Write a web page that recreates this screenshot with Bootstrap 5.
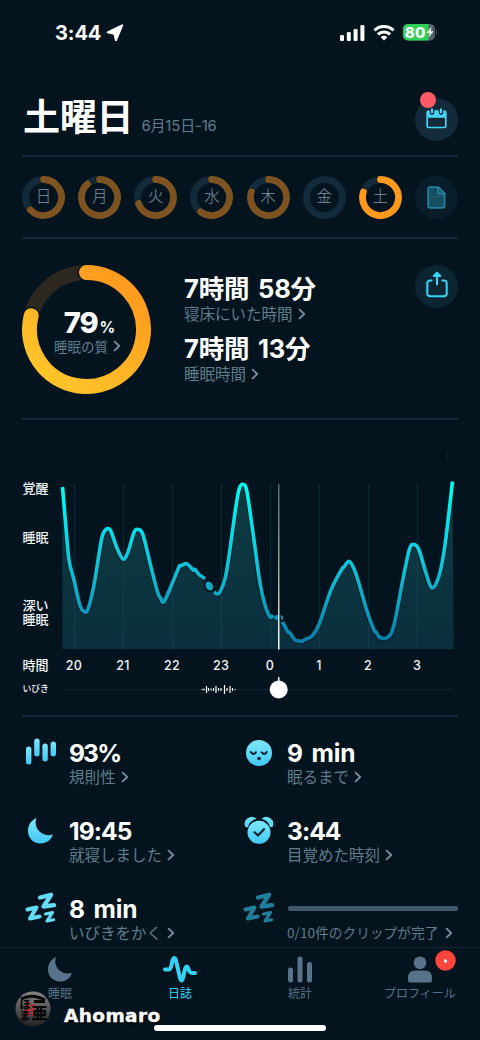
<!DOCTYPE html>
<html lang="ja" data-bs-theme="dark">
<head>
<meta charset="utf-8">
<meta name="viewport" content="width=device-width, initial-scale=1">
<title>睡眠日誌</title>
<link href="https://cdn.jsdelivr.net/npm/bootstrap@5.3.0/dist/css/bootstrap.min.css" rel="stylesheet">
<style>
:root{--night:#04141e;--rule:#13293a;--dim:#5f7d8b;--jp:"Noto Sans CJK JP",sans-serif;--num:Inter,"Noto Sans CJK JP",sans-serif}
body{background:var(--night);color:#fff;font-family:var(--jp);width:480px;height:1040px;overflow:hidden;line-height:1}
svg{display:block;flex:none}
.phone{width:480px;height:1040px}
.statusbar{height:64px;padding:1px 42px 0 55px}
.clock{font:700 20px/24px Inter,sans-serif;letter-spacing:-.1px}
.ruled{margin:0 22px;border-bottom:2px solid var(--rule)}
.head{height:93px}
.day-title{font-size:37px;font-weight:700;line-height:40px;letter-spacing:-.2px}
.date-sub{font:400 15px/20px var(--num);color:var(--dim);letter-spacing:-.2px}
.orb{width:43px;height:43px;border-radius:50%;background:#122a3a}
.alert-dot{position:absolute;left:5px;top:-6px;width:16px;height:16px;border-radius:50%;background:#ff5a68}
.week{height:82px}
.ring{width:43px;height:43px}
.ring span{position:absolute;inset:0;font-size:15.5px;line-height:39px;text-align:center;color:#8095a3;font-weight:300}
.quality{height:181px}
.dial{width:129px;height:129px}
.dial-text{position:absolute;inset:0;padding-top:43px}
.pct{font:800 29px/30px Inter,sans-serif;letter-spacing:-1px}
.pct small{font-size:15.5px;font-weight:700;margin-left:2px}
.caption{height:18px;font-size:15.5px;line-height:20px;color:var(--dim);white-space:nowrap}
.caption>span{margin-top:-2px}
.caption svg{margin-left:5px;margin-top:-1px}
.big{font:700 25.5px/30px Inter,"Noto Sans CJK JP",sans-serif;letter-spacing:-.2px;word-spacing:3px;white-space:nowrap}
.chart{height:296px}
.chart text{fill:#f2f5f6}
.stats{height:230px;overflow:hidden}
.stat{height:78px;width:218px}
.ico{width:47px;padding-left:4px}
.val{font:700 24.5px/30px Inter,sans-serif;letter-spacing:-.9px}
.val.words{letter-spacing:-.1px;word-spacing:3px}
.clipbar{height:5px;width:170px;border-radius:2px;background:#40596a;margin:-2px 0 0 1px}
.tabs{height:93px;border-top:1px solid #112430}
.tab{width:120px;padding-top:8px;color:#58738a;font-size:12px;line-height:14px}
.tab.on{color:#34d3f5}
.tab svg{margin-bottom:3px}
.pin{position:absolute;left:75px;top:2px;margin-left:0}
.home{position:absolute;left:154px;top:1025px;width:172px;height:6px;border-radius:3px;background:#fff}
.wm{position:absolute;left:14px;top:990px}
.wm b{font:700 18.5px/24px "DejaVu Sans",sans-serif;letter-spacing:.4px;-webkit-text-stroke:.4px #fff;text-shadow:1px 2px 2px #000}
</style>
</head>
<body>
<svg width="0" height="0" class="position-absolute">
  <defs>
    <linearGradient id="ice" x1="0" y1="0" x2="0" y2="1"><stop offset="0" stop-color="#7de8fb"/><stop offset="1" stop-color="#42c8f5"/></linearGradient>
    <symbol id="chev" viewBox="0 0 8 12"><path d="M1.6 1.6 6.2 6 1.6 10.4" fill="none" stroke="#7591a0" stroke-width="1.8" stroke-linecap="round" stroke-linejoin="round"/></symbol>
    <symbol id="zzz" viewBox="0 0 32 32"><g fill="none" stroke-linecap="round" stroke-linejoin="round"><path d="M15 5.500 26 2.800 18.500 14.500 29 13.200" stroke-width="4.300"/><path d="M2.500 17.500 11.500 15.500 5 26.500 14.500 24.500" stroke-width="4"/><path d="M20.500 22 27.500 20.500 22 29 28.500 27.800" stroke-width="3.200"/></g></symbol>
  </defs>
</svg>
<div class="phone position-relative d-flex flex-column">
  <header class="statusbar d-flex align-items-center">
    <span class="clock">3:44</span>
    <svg style="margin-left:5px" width="18" height="18" viewBox="0 0 18 18"><path d="M16.2 1.3 10 16.2 8.3 9.7 1.7 8.3Z" fill="#fff" stroke="#fff" stroke-width="2" stroke-linejoin="round"/></svg>
    <svg class="ms-auto" width="26" height="18" viewBox="0 0 26 18" fill="#fff"><rect x="0" y="11" width="4" height="6" rx="1.2"/><rect x="6.800" y="8" width="4" height="9" rx="1.2"/><rect x="13.600" y="5" width="4" height="12" rx="1.2"/><rect x="20.4" y="1" width="4" height="16" rx="1.2"/></svg>
    <svg style="margin-left:7px" width="22" height="17" viewBox="0 0 22 17"><g fill="none" stroke="#fff" stroke-width="3"><path d="M1.4 6.4a13.8 13.8 0 0 1 19.2 0"/><path d="M4.9 10.4a8.7 8.7 0 0 1 12.2 0"/></g><path d="M11 16.5 7.7 13.2a4.7 4.7 0 0 1 6.6 0Z" fill="#fff"/></svg>
    <svg style="margin-left:8px;margin-top:-2px" width="35" height="18" viewBox="0 0 35 18"><rect x="0" y="1" width="32" height="16.4" rx="5" fill="#53606a"/><path d="M5 1H25.5V17.4H5A5 5 0 0 1 0 12.4V6A5 5 0 0 1 5 1Z" fill="#30cf58"/><path d="M33 6.5q2 2.5 0 5.5Z" fill="#53606a"/><text x="1.8" y="14.5" font-family="Inter,sans-serif" font-weight="800" font-size="15" fill="#fff" textLength="20.5">80</text><path d="M28.5 3.6 23.7 10h3l-1.2 4.6L30.6 8.200h-3Z" fill="#fff"/></svg>
  </header>

  <section class="head ruled d-flex">
    <h1 class="day-title mb-0" style="padding:31px 0 0 1px">土曜日</h1>
    <span class="date-sub ms-2" style="padding-top:52px">6月15日-16</span>
    <div class="orb ms-auto position-relative d-flex justify-content-center" style="margin-top:34px;padding-top:10px">
      <svg width="21" height="21" viewBox="0 0 21 21"><rect x="1.200" y="3" width="18.600" height="16.500" rx="1.6" fill="none" stroke="#45d5f6" stroke-width="1.7"/><path d="M1 3H20V9.800H1Z" fill="#45d5f6"/><path d="M6 1V4.600M15 1V4.600" stroke="#122a3a" stroke-width="4.600" stroke-linecap="round"/><path d="M6 1.300V4.600M15 1.300V4.600" stroke="#45d5f6" stroke-width="2" stroke-linecap="round"/></svg>
      <span class="alert-dot"></span>
    </div>
  </section>

  <section class="week ruled d-flex justify-content-between align-items-center" id="week">
    <div class="orb order-last d-flex align-items-center justify-content-center" style="background:#071e2a">
      <svg width="19" height="23" viewBox="0 0 19 23"><path d="M3 1.200H11.500L17.500 7.300V20A1.800 1.800 0 0 1 15.700 21.800H3A1.800 1.800 0 0 1 1.200 20V3A1.800 1.800 0 0 1 3 1.200Z" fill="#164e62" stroke="#2382a0" stroke-width="1.800"/><path d="M11.200 1.500V6A1.700 1.700 0 0 0 12.900 7.700H17.300" fill="none" stroke="#2382a0" stroke-width="1.800"/><path d="M3.500 10.500H13" stroke="#2b7188" stroke-dasharray="2 1"/></svg>
    </div>
  </section>

  <section class="quality ruled d-flex">
    <div class="dial position-relative" style="margin-top:25.500px">
      <svg width="129" height="129" viewBox="0 0 129 129">
        <defs><linearGradient id="sun" gradientUnits="userSpaceOnUse" x1="100" y1="10" x2="25" y2="110"><stop offset="0" stop-color="#ff991d"/><stop offset="1" stop-color="#ffc42a"/></linearGradient></defs>
        <circle cx="64.500" cy="64.500" r="57" fill="none" stroke="#2d2721" stroke-width="15"/>
        <g fill="none" stroke-linecap="round"><path d="M64.500 7.500A57 57 0 1 1 9.200 50.700" stroke="#04141e" stroke-width="18"/><path d="M64.500 7.500A57 57 0 1 1 9.200 50.700" stroke="url(#sun)" stroke-width="15"/></g>
      </svg>
      <div class="dial-text text-center">
        <div class="pct" style="padding-left:5px">79<small>%</small></div>
        <div class="caption d-flex align-items-center justify-content-center" style="font-size:13.500px;line-height:16px;margin-top:-5px;padding-left:2px"><span>睡眠の質</span><svg width="8" height="12"><use href="#chev"/></svg></div>
      </div>
    </div>
    <div style="margin-left:33px;padding-top:35px">
      <div class="big">7時間 58分</div>
      <div class="caption d-flex align-items-center" style="margin-top:1px"><span>寝床にいた時間</span><svg width="8" height="12"><use href="#chev"/></svg></div>
      <div class="big" style="margin-top:11px">7時間 13分</div>
      <div class="caption d-flex align-items-center" style="margin-top:1px"><span>睡眠時間</span><svg width="8" height="12"><use href="#chev"/></svg></div>
    </div>
    <div class="orb ms-auto d-flex justify-content-center" style="margin-top:26px;padding-top:6px;background:#0b2532">
      <svg width="22" height="27" viewBox="0 0 22 27" fill="none" stroke="#35d9f8" stroke-width="2" stroke-linecap="round" stroke-linejoin="round"><path d="M5.600 9.500H4A2.600 2.600 0 0 0 1.300 12.100V22.500A2.600 2.600 0 0 0 4 25.200H18A2.600 2.600 0 0 0 20.700 22.500V12.100A2.600 2.600 0 0 0 18 9.500H16.400M11 13.500V4"/><path d="M11 1.800 7.800 5H14.200Z" fill="#35d9f8"/></svg>
    </div>
  </section>

  <section class="chart position-relative">
    <svg width="480" height="296" viewBox="0 420 480 296">
      <defs>
        <linearGradient id="line" gradientUnits="userSpaceOnUse" x1="0" y1="484" x2="0" y2="642"><stop offset="0" stop-color="#00fff0"/><stop offset=".25" stop-color="#05e3ef"/><stop offset=".55" stop-color="#10bfd6"/><stop offset="1" stop-color="#087fa8"/></linearGradient>
        <linearGradient id="area" gradientUnits="userSpaceOnUse" x1="0" y1="484" x2="0" y2="649"><stop offset="0" stop-color="#0d3b41"/><stop offset="1" stop-color="#0a2f3e"/></linearGradient>
        <linearGradient id="cursor" x1="0" y1="0" x2="0" y2="1"><stop offset="0" stop-color="#58646b"/><stop offset=".6" stop-color="#a8afb3"/><stop offset="1" stop-color="#fff"/></linearGradient>
      </defs>
      <path id="fillArea" fill="url(#area)"/>
      <path d="M74.500 484V649M123.500 484V649M172.500 484V649M221.500 484V649M270.500 484V649M319.500 484V649M368.500 484V649M417.500 484V649" stroke="#1a5267" stroke-opacity=".36"/>
      <g id="curve" fill="none" stroke-linejoin="round"></g>
      <ellipse cx="209.300" cy="586" rx="5.300" ry="6.500" transform="rotate(-25 209.300 586)" fill="#04141e"/>
      <ellipse cx="209.300" cy="586" rx="3.500" ry="4.800" transform="rotate(-25 209.300 586)" fill="#12a9c4"/>
      <circle cx="276.800" cy="617.400" r="2.500" fill="#0c93b4"/><path d="M281 615.500q1.500 1.500 1 4" stroke="#0c93b4" stroke-width="2" fill="none"/>
      <rect x="278" y="484" width="1.500" height="165.500" fill="url(#cursor)"/>
      <path d="M447.500 452v9" stroke="#0d2230"/>
      <g font-family="Noto Sans CJK JP,sans-serif" font-size="13" font-weight="500">
        <text x="22.500" y="493">覚醒</text><text x="22.500" y="542">睡眠</text><text x="22.500" y="610">深い</text><text x="22.500" y="624">睡眠</text><text x="22.500" y="669.500">時間</text><text x="22.500" y="692" font-size="8.800">いびき</text>
      </g>
      <g font-family="Inter,sans-serif" font-size="12.500" font-weight="500" letter-spacing=".3" text-anchor="middle">
        <text x="74" y="669.500">20</text><text x="123" y="669.500">21</text><text x="172" y="669.500">22</text><text x="221" y="669.500">23</text><text x="270" y="669.500">0</text><text x="319" y="669.500">1</text><text x="368" y="669.500">2</text><text x="417" y="669.500">3</text>
      </g>
      <path d="M63 689.500H453" stroke="#0b2230"/>
      <path d="M202 689v1M204 688.500v2M206.500 686v7M208.500 688v3M211 688.500v2M213.500 688v3M216 686v7M218.500 688v3M221 688v3M224.500 685v9M227 688v3M230 686v7M232.500 688v3M235 689v1" stroke="#fff" stroke-width="1.200"/>
      <path d="M278.700 677v6" stroke="#fff" stroke-width="1.500"/><circle cx="278.700" cy="689.500" r="9" fill="#fff"/>
    </svg>
  </section>
  <div class="ruled" style="margin-top:-1px"></div>

  <section class="stats px-4" style="padding-top:21px">
    <div class="row g-0" style="margin-left:-2px;margin-right:-4px">
      <div class="stat d-flex"><div class="ico"><svg width="31" height="27" viewBox="0 0 31 27" fill="url(#ice)"><rect x="0" y="8.500" width="5.400" height="18" rx="2.700"/><rect x="8.200" y="0.500" width="5.400" height="18" rx="2.700"/><rect x="16.400" y="5.500" width="5.400" height="18" rx="2.700"/><rect x="24.600" y="3.500" width="5.400" height="15" rx="2.700"/></svg></div>
        <div><div class="val" style="letter-spacing:-1.800px">93%</div><div class="caption d-flex align-items-center"><span>規則性</span><svg width="8" height="12"><use href="#chev"/></svg></div></div></div>
      <div class="stat d-flex"><div class="ico"><svg width="30" height="30" viewBox="0 0 30 30"><circle cx="15" cy="15" r="13" fill="url(#ice)"/><g fill="none" stroke="#05202c" stroke-width="2" stroke-linecap="round"><path d="M6.800 14q2.500 3.600 5 .4M17.700 14.400q2.700 3.200 5-.4"/></g><circle cx="15" cy="20.500" r="1.800" fill="#05202c"/></svg></div>
        <div><div class="val words">9 min</div><div class="caption d-flex align-items-center"><span>眠るまで</span><svg width="8" height="12"><use href="#chev"/></svg></div></div></div>
      <div class="stat d-flex"><div class="ico"><svg width="28" height="30" viewBox="0 0 28 30"><path d="M10.500 2C8.500 7 10 12.500 14 16c3.700 3.100 8.500 4 12.800 2.300C25.500 24 20.500 27.500 14.500 27.500 7.500 27.500 2 22 2 15 2 9 5.500 4 10.500 2Z" fill="url(#ice)"/></svg></div>
        <div><div class="val">19:45</div><div class="caption d-flex align-items-center"><span>就寝しました</span><svg width="8" height="12"><use href="#chev"/></svg></div></div></div>
      <div class="stat d-flex"><div class="ico"><svg width="30" height="30" viewBox="0 0 30 30"><g fill="url(#ice)"><path d="M1.600 9.500A6.300 6.300 0 0 1 11 2.500Q4.500 5 3.500 10.300 2 11 1.600 9.500Z" stroke="#62dcf9" stroke-width="1.400"/><path d="M28.400 9.500A6.300 6.300 0 0 0 19 2.500Q25.500 5 26.500 10.300 28 11 28.400 9.500Z" stroke="#62dcf9" stroke-width="1.400"/><circle cx="15" cy="16.300" r="11.500"/></g><path d="M10.600 16.300 14 19.500 20 13.200" fill="none" stroke="#05202c" stroke-width="2.200" stroke-linecap="round" stroke-linejoin="round"/></svg></div>
        <div><div class="val">3:44</div><div class="caption d-flex align-items-center"><span>目覚めた時刻</span><svg width="8" height="12"><use href="#chev"/></svg></div></div></div>
      <div class="stat d-flex"><div class="ico"><svg width="32" height="32" stroke="#62dcf8" style="margin:-2px 0 0 -1px"><use href="#zzz"/></svg></div>
        <div><div class="val words">8 min</div><div class="caption d-flex align-items-center"><span>いびきをかく</span><svg width="8" height="12"><use href="#chev"/></svg></div></div></div>
      <div class="stat d-flex"><div class="ico"><svg width="32" height="32" stroke="#227f9c" style="margin:-2px 0 0 -1px"><use href="#zzz"/></svg></div>
        <div><div class="d-flex align-items-center" style="height:30px"><div class="clipbar"></div></div><div class="caption d-flex align-items-center" style="font-size:13.700px"><span>0/10件のクリップが完了</span><svg width="8" height="12" style="margin-left:7px"><use href="#chev"/></svg></div></div></div>
    </div>
  </section>

  <nav class="tabs d-flex">
    <div class="tab d-flex flex-column align-items-center"><svg width="26" height="27" viewBox="1 1 27 28"><path d="M10.500 2C8.500 7 10 12.500 14 16c3.700 3.100 8.500 4 12.800 2.300C25.500 24 20.500 27.500 14.500 27.500 7.500 27.500 2 22 2 15 2 9 5.500 4 10.500 2Z" fill="currentColor"/></svg>睡眠</div>
    <div class="tab on d-flex flex-column align-items-center"><svg width="34" height="27" viewBox="0 0 34 27"><path d="M2 13.500H5.500Q7.500 13.500 8.500 9L9.500 4.500Q11.300-.5 13 4.500L17 22Q18.500 27 20 22L22 13Q23.700 8 25.500 13 26.700 17 29 17H32" fill="none" stroke="currentColor" stroke-width="4" stroke-linecap="round"/></svg>日誌</div>
    <div class="tab d-flex flex-column align-items-center"><svg width="26" height="27" viewBox="0 0 26 27" fill="currentColor"><rect x="1" y="11.500" width="5" height="15" rx="2.500"/><rect x="10.500" y=".5" width="5" height="26" rx="2.500"/><rect x="20" y="6" width="5" height="20.500" rx="2.500"/></svg>統計</div>
    <div class="tab position-relative d-flex flex-column align-items-center"><svg width="26" height="27" viewBox="0 0 26 27" fill="currentColor"><circle cx="13" cy="6.700" r="6.300"/><path d="M8 14.500H18Q25 14.500 25 22V24.500Q25 26.500 23 26.500H3Q1 26.500 1 24.500V22Q1 14.500 8 14.500Z"/></svg>プロフィール
      <svg class="pin" width="21" height="21"><circle cx="10.500" cy="10.500" r="10.200" fill="#ff453c"/><circle cx="10.500" cy="11" r="1.700" fill="#fff"/></svg></div>
  </nav>

  <div class="wm d-flex align-items-center">
    <svg width="38" height="38" viewBox="0 0 38 38"><defs><linearGradient id="steel" x1="0" y1="0" x2="0" y2="1"><stop offset="0" stop-color="#858585"/><stop offset=".5" stop-color="#555"/><stop offset="1" stop-color="#202020"/></linearGradient></defs><circle cx="19" cy="19" r="17.500" fill="url(#steel)"/><path d="M12 12h4v14h-4ZM17 14h4l-1 6 1 6h-3Z" fill="#c22a36"/><g font-family="Noto Sans CJK JP,sans-serif" font-weight="900" fill="#060606"><text x="17.500" y="28.500" font-size="16">亜</text><text x="5.500" y="18.500" font-size="11">ほ</text><text x="5.500" y="29.500" font-size="11">ま</text></g><path d="M7 9Q18 3 31 10M20 11.500H31" stroke="#060606" stroke-width="3" fill="none"/></svg>
    <b style="margin-left:12px;padding-top:14px">Ahomaro</b>
  </div>
  <div class="home"></div>
</div>

<script src="https://cdn.jsdelivr.net/npm/bootstrap@5.3.0/dist/js/bootstrap.bundle.min.js"></script>
<script>
// Weekly score rings
const week=[['日',227],['月',319],['火',251],['水',218],['木',289],['金',0],['土',288]];
document.getElementById('week').insertAdjacentHTML('afterbegin',week.map(([d,a],i)=>{
  const r=a*Math.PI/180,x=21.5+18*Math.sin(r),y=21.5-18*Math.cos(r),p=`M21.5 3.5A18 18 0 ${a>180?1:0} 1 ${x} ${y}`;
  const arc=a?`<path d="${p}" stroke="#04141e" stroke-width="8"/><path d="${p}" stroke="${i==6?'#ff991c':'#7d5421'}" stroke-width="6.8"/>`:'';
  return `<div class="ring position-relative"><svg width="43" height="43" fill="none" stroke-linecap="round"><circle cx="21.5" cy="21.5" r="18" stroke="#132a3a" stroke-width="7"/>${arc}</svg><span>${d}</span></div>`}).join(''));

// Sleep depth samples, in three runs separated by snoring gaps
const runs=[
 [[62.5,487],[65.500,522],[69,560],[74,580],[79.500,604],[84,611.500],[88,609],[94,585],[101,542],[104,532],[108,528.500],[111,531.500],[117,548],[123,559],[128,552],[134,532.500],[138,529.500],[143,535],[151,567],[157.500,592],[160.500,598],[164,601.500],[172,584],[179,567],[180.500,566],[186,563.500],[190,566.500],[193,570],[195,569.500],[199,574.500],[205,578.500]],
 [[214,592],[217.500,594],[220,592],[225,579],[229,556],[236,506],[239.500,488],[243.500,484.500],[247,492],[253,533],[260,583],[265,605],[270,617],[273,615]],
 [[282.500,622],[288,632],[290,633],[295,640],[299,641],[302,641.500],[305,639.500],[312,636],[319,624.500],[331,590],[342,569],[344,567],[349.500,561.500],[356,574],[367,611],[374,630],[376,632],[380,637.500],[388,637],[394,625],[403,579],[409.500,549],[414,544.500],[419,550],[426,573],[432,588],[439,576],[445,545],[452.500,481.500]]];
const spline=p=>p.slice(1).map((q,i)=>{const a=p[i-1]||p[i],b=p[i],c=p[i+2]||q;
  return `C${b[0]+(q[0]-a[0])/6} ${b[1]+(q[1]-a[1])/6} ${q[0]-(c[0]-b[0])/6} ${q[1]-(c[1]-b[1])/6} ${q[0]} ${q[1]}`}).join('');
const all=runs.flat();
document.getElementById('fillArea').setAttribute('d','M62.5 649L'+all[0]+spline(all)+'L453.5 649Z');
document.getElementById('curve').innerHTML=runs.map(p=>`<path d="M${p[0]}${spline(p)}" stroke="#04141e" stroke-opacity=".55" stroke-width="5.8"/><path d="M${p[0]}${spline(p)}" stroke="url(#line)" stroke-width="3.6"/>`).join('');
</script>
</body>
</html>
